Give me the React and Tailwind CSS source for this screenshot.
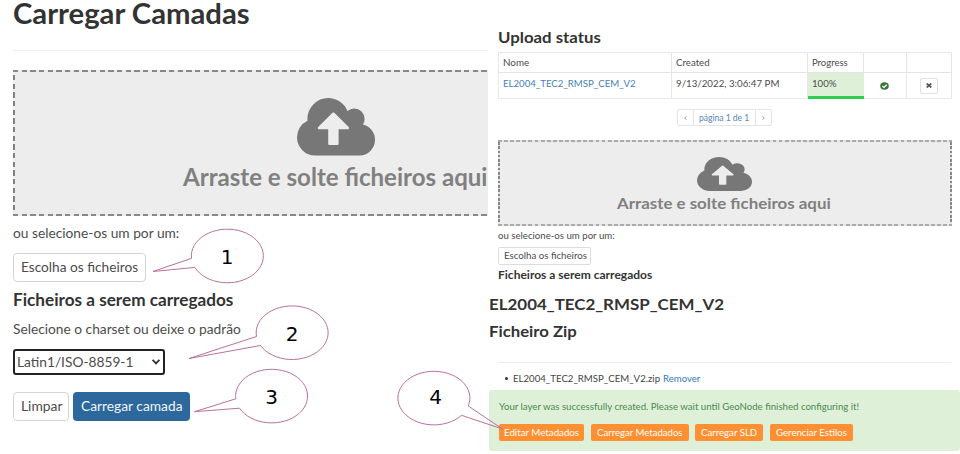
import { useLayoutEffect, useRef, useState } from "react";

/* One line of text stretched horizontally to a given width. */
function Fit({ w, className = "", children }) {
  const ref = useRef(null);
  const [scale, setScale] = useState(1);
  useLayoutEffect(() => {
    setScale(w / ref.current.offsetWidth);
  }, [w]);
  return (
    <span className={"block shrink-0 text-left " + className} style={{ width: w }}>
      <span ref={ref} className="inline-block origin-left whitespace-nowrap" style={{ transform: `scaleX(${scale})` }}>
        {children}
      </span>
    </span>
  );
}

function CloudUpload({ className }) {
  return (
    <svg viewBox="0 0 1920 1408" preserveAspectRatio="none" className={className} fill="currentColor">
      <path d="M1280 736q0-14-9-23l-352-352q-9-9-23-9t-23 9l-351 351q-10 12-10 24 0 14 9 23t23 9h224v352q0 13 9.5 22.5t22.5 9.5h192q13 0 22.5-9.5t9.5-22.5v-352h224q13 0 22.5-9.5t9.5-22.5zm640 288q0 159-112.5 271.5t-271.5 112.5h-1088q-185 0-316.5-131.5t-131.5-316.5q0-130 70-240t188-165q-2-30-2-43 0-212 150-362t362-150q156 0 285.5 87t188.5 231q71-62 166-62 106 0 181 75t75 181q0 76-41 138 130 31 213.5 135.5t83.5 238.5z" />
    </svg>
  );
}

function LeftPanel() {
  return (
    <section className="flex h-full w-[488px] shrink-0 flex-col items-start overflow-hidden pl-[13px] text-[13.5px] leading-[18px] text-[#4c4c4c]">
      <h1 className="h-[50px] text-[28.5px] leading-[27px] font-bold text-[#333]">
        <Fit w={237}>Carregar Camadas</Fit>
      </h1>
      <div className="h-px w-full bg-[#f0f0f0]" />
      <div className="mt-[19px] flex h-[146px] w-full shrink-0 flex-col bg-[#ededed] text-[#777]">
        <div className="h-[2px] bg-[repeating-linear-gradient(90deg,#888_0_5.4px,transparent_5.4px_8.67px)]" />
        <div className="flex flex-1">
          <div className="w-[2px] bg-[repeating-linear-gradient(180deg,transparent_0_3px,#808080_3px_8.4px,transparent_8.4px_8.67px)]" />
          <div className="flex flex-col pl-[168px]">
            <CloudUpload className="mt-[26px] ml-[113.5px] h-[57.5px] w-[78px]" />
            <Fit w={304.5} className="mt-[6px] text-[24.5px] leading-[30px] font-bold text-[#808080]">Arraste e solte ficheiros aqui</Fit>
          </div>
        </div>
        <div className="h-[2px] bg-[repeating-linear-gradient(90deg,#888_0_5.4px,transparent_5.4px_8.67px)]" />
      </div>
      <Fit w={166} className="mt-[8px]">ou selecione-os um por um:</Fit>
      <button className="mt-[11px] flex h-[29px] w-[133px] shrink-0 items-center rounded-[4px] border border-[#d4d4d4] pb-px pl-[6.5px]">
        <Fit w={117.5}>Escolha os ficheiros</Fit>
      </button>
      <h2 className="mt-[8px] text-[16.5px] leading-5 font-bold text-[#333]">
        <Fit w={220.5}>Ficheiros a serem carregados</Fit>
      </h2>
      <Fit w={228} className="mt-[10px]">Selecione o charset ou deixe o padrão</Fit>
      <div className="mt-[11px] flex h-[26px] w-[152px] shrink-0 items-center justify-between rounded-[3px] border-2 border-[#222] pr-[3px] pl-[2px]">
        <Fit w={116}>Latin1/ISO-8859-1</Fit>
        <svg viewBox="0 0 8 6" className="h-[6px] w-[8px]" fill="none" stroke="#333" strokeWidth="1.8">
          <path d="M0.6 0.8L4 4.4L7.4 0.8" />
        </svg>
      </div>
      <div className="mt-[17px] flex h-[28.5px] shrink-0 gap-[4px]">
        <button className="flex w-[56px] items-center rounded-[4px] border border-[#d4d4d4] pb-px pl-[6.5px]">
          <Fit w={41}>Limpar</Fit>
        </button>
        <button className="flex w-[116.5px] items-center rounded-[4px] bg-[#2c689c] pb-px pl-[8px] text-[#f0f4f8]">
          <Fit w={101}>Carregar camada</Fit>
        </button>
      </div>
    </section>
  );
}

function StatusTable() {
  return (
    <div className="mt-[5px] ml-[9.5px] grid h-[47px] w-[454px] shrink-0 grid-cols-[173px_136px_56px_43.5px_44.5px] grid-rows-[20px_26px] border-t border-l border-[#e8e8e8]">
      <div className="border-r border-b border-[#e4e4e4] pt-[3px] pl-[4px]"><Fit w={26}>Nome</Fit></div>
      <div className="border-r border-b border-[#e4e4e4] pt-[3px] pl-[4px]"><Fit w={33.5}>Created</Fit></div>
      <div className="border-r border-b border-[#e4e4e4] pt-[3px] pl-[4.5px]"><Fit w={36}>Progress</Fit></div>
      <div className="border-r border-b border-[#e4e4e4]" />
      <div className="border-r border-b border-[#e4e4e4]" />
      <div className="border-r border-b border-[#e8e8e8] pt-[3.5px] pl-[4px] text-[#4682b8]"><Fit w={133}>EL2004_TEC2_RMSP_CEM_V2</Fit></div>
      <div className="border-r border-b border-[#e8e8e8] pt-[3.5px] pl-[4px]"><Fit w={103}>9/13/2022, 3:06:47 PM</Fit></div>
      <div className="border-b-[3px] border-[#33cc52] bg-[#dff0d8] pt-[3.5px] pl-[4.5px]"><Fit w={24.5}>100%</Fit></div>
      <div className="flex items-center justify-center border-r border-b border-[#e8e8e8]">
        <svg viewBox="0 0 9 8" className="h-[8px] w-[9px]" fill="none">
          <ellipse cx="4.5" cy="4" rx="4.3" ry="3.7" fill="#3c763d" />
          <path d="M2.4 4L4 5.5L6.8 2.8" stroke="#fff" strokeWidth="1.2" />
        </svg>
      </div>
      <div className="flex items-center justify-center border-r border-b border-[#e8e8e8]">
        <button className="flex h-[16px] w-[18px] items-center justify-center rounded-[2px] border border-[#e0e0e0]">
          <svg viewBox="0 0 6 5" className="h-[5px] w-[6px]" stroke="#555" strokeWidth="1.7">
            <path d="M0.7 0.5L5.3 4.5M5.3 0.5L0.7 4.5" />
          </svg>
        </button>
      </div>
    </div>
  );
}

function Pagination() {
  return (
    <div className="mt-[10px] ml-[188.5px] flex h-[17px] w-[95.5px] shrink-0 rounded-[2px] border border-[#e4e4e4]">
      <div className="flex w-[16.5px] items-center justify-center border-r border-[#e4e4e4]">
        <svg viewBox="0 0 3 4" className="h-[4px] w-[3px]" fill="none" stroke="#888" strokeWidth="0.8"><path d="M2.5 0.4L0.7 2L2.5 3.6" /></svg>
      </div>
      <div className="flex w-[62px] items-center border-r border-[#e4e4e4] pl-[5px] text-[#5585b5]"><Fit w={50}>página 1 de 1</Fit></div>
      <div className="flex flex-1 items-center justify-center">
        <svg viewBox="0 0 3 4" className="h-[4px] w-[3px]" fill="none" stroke="#888" strokeWidth="0.8"><path d="M0.5 0.4L2.3 2L0.5 3.6" /></svg>
      </div>
    </div>
  );
}

function RightPanel() {
  return (
    <section className="flex h-full w-[472px] flex-col items-start overflow-hidden pt-[28px] text-[8.7px] leading-[13px] text-[#4c4c4c]">
      <h2 className="pl-[10px] text-[15px] leading-[19px] font-bold text-[#333]"><Fit w={103}>Upload status</Fit></h2>
      <StatusTable />
      <Pagination />
      <div className="mt-[14px] ml-[10px] flex h-[86px] w-[453.5px] shrink-0 flex-col bg-[#ededed] text-[#777]">
        <div className="h-[2px] bg-[repeating-linear-gradient(90deg,#aaa_0_3.8px,#e4e4e4_3.8px_6.1px)]" />
        <div className="flex flex-1">
          <div className="w-[1.5px] bg-[repeating-linear-gradient(180deg,#888_0_2.6px,#e4e4e4_2.6px_4.3px)]" />
          <div className="flex flex-1 flex-col pl-[117.5px]">
            <CloudUpload className="mt-[14.5px] ml-[79.5px] h-[34px] w-[55px]" />
            <Fit w={214} className="mt-[3px] text-[15px] leading-[19px] font-bold text-[#808080]">Arraste e solte ficheiros aqui</Fit>
          </div>
          <div className="w-[1.5px] bg-[repeating-linear-gradient(180deg,#888_0_2.6px,#e4e4e4_2.6px_4.3px)]" />
        </div>
        <div className="h-[2px] bg-[repeating-linear-gradient(90deg,#aaa_0_3.8px,#e4e4e4_3.8px_6.1px)]" />
      </div>
      <Fit w={116.5} className="mt-[3px] ml-[10px]">ou selecione-os um por um:</Fit>
      <button className="mt-[5px] ml-[10px] flex h-[18px] w-[93px] shrink-0 items-center rounded-[2px] border border-[#ddd] pb-px pl-[4.5px]">
        <Fit w={82.5}>Escolha os ficheiros</Fit>
      </button>
      <h3 className="mt-[2.5px] ml-[10px] text-[10.5px] leading-[15px] font-bold text-[#333]"><Fit w={154.5}>Ficheiros a serem carregados</Fit></h3>
      <h2 className="mt-[11.5px] ml-px text-[15px] leading-[20px] font-bold text-[#333]"><Fit w={234.5}>EL2004_TEC2_RMSP_CEM_V2</Fit></h2>
      <h2 className="mt-[7px] ml-px text-[15px] leading-[20px] font-bold text-[#333]"><Fit w={88}>Ficheiro Zip</Fit></h2>
      <div className="mt-[21px] ml-[10px] h-px w-[453px] shrink-0 bg-[#eee]" />
      <div className="mt-[9px] flex items-center pl-[16.5px] text-[#444]">
        <span className="mr-[5.5px] h-[2.5px] w-[3px] rounded-full bg-[#333]" />
        <Fit w={147.5}>EL2004_TEC2_RMSP_CEM_V2.zip</Fit>
        <Fit w={37.5} className="ml-[2.5px] text-[#337ab7]">Remover</Fit>
      </div>
      <div className="mt-[5px] ml-px h-[61px] w-[471px] shrink-0 rounded-[3px] bg-[#dff0d8] pt-[9.5px] pl-[9.5px]">
        <Fit w={360.5} className="text-[#4a8a50]">Your layer was successfully created. Please wait until GeoNode finished configuring it!</Fit>
        <div className="mt-[11.5px] flex h-[17px] text-white">
          <button className="flex w-[85px] items-center rounded-[2px] bg-[#ff8f31] pb-px pl-[5px]"><Fit w={75}>Editar Metadados</Fit></button>
          <button className="ml-[7px] flex w-[98px] items-center rounded-[2px] bg-[#ff8f31] pb-px pl-[6px]"><Fit w={86}>Carregar Metadados</Fit></button>
          <button className="ml-[6.5px] flex w-[68px] items-center rounded-[2px] bg-[#ff8f31] pb-px pl-[6px]"><Fit w={56.5}>Carregar SLD</Fit></button>
          <button className="ml-[7px] flex w-[83px] items-center rounded-[2px] bg-[#ff8f31] pb-px pl-[6px]"><Fit w={71}>Gerenciar Estilos</Fit></button>
        </div>
      </div>
    </section>
  );
}

/* Numbered speech balloons laid over both panels. */
function Callouts() {
  return (
    <svg viewBox="0 0 960 454" className="pointer-events-none absolute inset-0 h-[454px] w-[960px]">
      <g fill="none" stroke="#b8729c" strokeWidth="1">
        <path d="M191.5 258.3L153 271.5L194.8 267.4A36 26.8 0 1 0 191.5 258.3Z" />
        <path d="M256.5 336.5L189 358.5L260.5 345.5A36 26.8 0 1 0 256.5 336.5Z" />
        <path d="M235.8 398.8L194.5 411.7L239.5 408.2A36 26.8 0 1 0 235.8 398.8Z" />
        <path d="M468.3 406L502.5 429L461.5 415.3A36 26.8 0 1 1 468.3 406Z" />
      </g>
      <g className="font-['DejaVu_Sans',sans-serif] text-[20px]" fill="#000" textAnchor="middle">
        <text x="227" y="264">1</text>
        <text x="292" y="341">2</text>
        <text x="271.5" y="404">3</text>
        <text x="435.5" y="404">4</text>
      </g>
    </svg>
  );
}

export default function App() {
  return (
    <main className="relative flex h-[454px] w-[960px] overflow-hidden bg-white font-[Lato,sans-serif]">
      <LeftPanel />
      <RightPanel />
      <Callouts />
    </main>
  );
}
